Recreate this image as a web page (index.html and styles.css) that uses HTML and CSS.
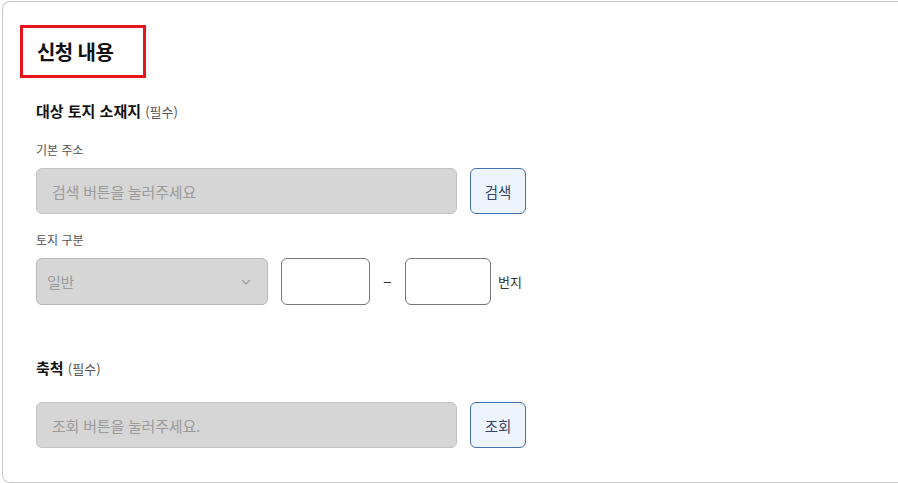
FILE: index.html
```html
<!DOCTYPE html>
<html lang="ko">
<head>
<meta charset="utf-8">
<title>신청 내용</title>
<link rel="stylesheet" href="styles.css">
</head>
<body>
<div class="card">
  <div class="title-box"><h2 class="title">신청 내용</h2></div>

  <h3 class="section-head">대상 토지 소재지 <span class="req">(필수)</span></h3>

  <div class="label label-first">기본 주소</div>
  <div class="row">
    <div class="field field-wide"><span class="placeholder">검색 버튼을 눌러주세요</span></div>
    <button class="btn">검색</button>
  </div>

  <div class="label label-second">토지 구분</div>
  <div class="row row-land">
    <div class="field field-select">
      <span class="placeholder">일반</span>
      <svg class="chev" width="10" height="6" viewBox="0 0 10 6"><path d="M1 1 L5 5 L9 1" fill="none" stroke="#9a9a9a" stroke-width="1.2"/></svg>
    </div>
    <div class="box box-1"></div>
    <span class="dash">−</span>
    <div class="box box-2"></div>
    <span class="suffix">번지</span>
  </div>

  <h3 class="section-head section-head-2">축척 <span class="req">(필수)</span></h3>
  <div class="row row-scale">
    <div class="field field-wide"><span class="placeholder">조회 버튼을 눌러주세요.</span></div>
    <button class="btn">조회</button>
  </div>
</div>
</body>
</html>
```
FILE: styles.css
```css
html, body {
  margin: 0;
  padding: 0;
  background: #ffffff;
  overflow: hidden;
  width: 898px;
  height: 483px;
}
body {
  font-family: "Noto Sans CJK KR", "Noto Sans", sans-serif;
  color: #222;
}
.card {
  box-sizing: border-box;
  margin: 1px 0 0 2px;
  width: 896px;
  height: 482px;
  border: 1px solid #c8c8c8;
  border-right: none;
  border-radius: 8px 0 0 8px;
  padding: 23px 0 0 33px;
}
.title-box {
  box-sizing: border-box;
  margin-left: -16px;
  width: 126px;
  height: 53px;
  border: 3px solid #e8141c;
  padding: 0 0 0 14px;
  display: flex;
  align-items: center;
}
.title {
  margin: 0;
  font-size: 20px;
  font-weight: 700;
  line-height: 24px;
  color: #111;
  letter-spacing: -0.6px;
}
.section-head {
  margin: 23px 0 0 0;
  font-size: 15px;
  font-weight: 700;
  line-height: 20px;
  color: #111;
}
.section-head-2 {
  margin-top: 53px;
}
.req {
  font-size: 13px;
  font-weight: 400;
  color: #555;
}
.label {
  font-size: 12px;
  line-height: 16px;
  color: #555;
}
.label-first { margin-top: 20px; }
.label-second { margin-top: 18px; }
.row {
  display: flex;
  align-items: center;
  margin-top: 10px;
}
.row-scale { margin-top: 23px; }
.field {
  box-sizing: border-box;
  height: 46px;
  background: #d6d6d6;
  border: 1px solid #c2c2c2;
  border-radius: 6px;
  display: flex;
  align-items: center;
  padding: 0 15px;
}
.field-wide { width: 421px; }
.placeholder {
  font-size: 15px;
  color: #9b9b9b;
  letter-spacing: -0.2px;
}
.btn {
  box-sizing: border-box;
  margin-left: 13px;
  width: 56px;
  height: 46px;
  background: #eef4fd;
  border: 1px solid #4672b4;
  border-radius: 6px;
  font-family: inherit;
  font-size: 14.5px;
  color: #34466a;
  padding: 0;
}
.field-select {
  width: 232px;
  height: 47px;
  padding: 0 10px;
  justify-content: space-between;
  border-color: #b8b8b8;
}
.chev {
  margin-right: 6px;
}
.box {
  box-sizing: border-box;
  height: 47px;
  border: 1px solid #777;
  border-radius: 6px;
  background: #fff;
}
.box-1 { width: 89px; margin-left: 13px; }
.box-2 { width: 86px; }
.dash {
  width: 35px;
  text-align: center;
  font-size: 15px;
  color: #333;
}
.suffix {
  margin-left: 7px;
  font-size: 13px;
  color: #333;
}
```
